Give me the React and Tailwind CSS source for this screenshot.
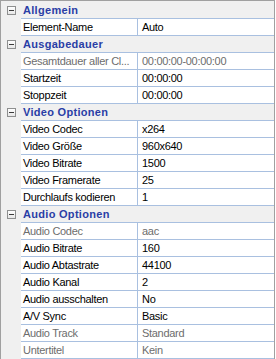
import React from "react";

const data = [
  { cat: "Allgemein", rows: [["Element-Name", "Auto"]] },
  {
    cat: "Ausgabedauer",
    rows: [
      ["Gesamtdauer aller Cl...", "00:00:00-00:00:00", true],
      ["Startzeit", "00:00:00"],
      ["Stoppzeit", "00:00:00"],
    ],
  },
  {
    cat: "Video Optionen",
    rows: [
      ["Video Codec", "x264"],
      ["Video Größe", "960x640"],
      ["Video Bitrate", "1500"],
      ["Video Framerate", "25"],
      ["Durchlaufs kodieren", "1"],
    ],
  },
  {
    cat: "Audio Optionen",
    rows: [
      ["Audio Codec", "aac", true],
      ["Audio Bitrate", "160"],
      ["Audio Abtastrate", "44100"],
      ["Audio Kanal", "2"],
      ["Audio ausschalten", "No"],
      ["A/V Sync", "Basic"],
      ["Audio Track", "Standard", true],
      ["Untertitel", "Kein", true],
    ],
  },
];

function Box() {
  return (
    <div className="w-[9px] h-[9px] border border-[#8e8f8f] bg-gradient-to-b from-white to-[#e6e6e6] flex items-center justify-center">
      <div className="w-[5px] h-px bg-[#3b3b3b]" />
    </div>
  );
}

export default function App() {
  return (
    <div className="w-[276px] h-[359px] bg-white font-['Liberation_Sans',Arial,sans-serif] text-[11px]">
      <div className="w-[275px] h-[359px] border border-b-0 border-[#a0a0a0] pt-px bg-[#f0f0f0]">
        {data.map((g) => (
          <React.Fragment key={g.cat}>
            <div className="flex h-[17px]">
              <div className="w-[20px] shrink-0 flex items-center pl-[6px]">
                <Box />
              </div>
              <div className="flex-1 border-b border-[#a9c0e0] pl-[2px] leading-[17px] font-bold tracking-[0.3px] text-[#2a3ea6] whitespace-nowrap">
                {g.cat}
              </div>
            </div>
            {g.rows.map(([n, v, dis]) => (
              <div key={n} className="flex h-[17px]">
                <div className="w-[20px] shrink-0" />
                <div
                  className={`flex-1 flex border-b border-[#a9c0e0] bg-white leading-[17px] tracking-[-0.3px] ${
                    dis ? "text-[#6d6d6d]" : "text-black"
                  }`}
                >
                  <div className="w-[116px] shrink-0 pl-[2px] pr-[1px] whitespace-nowrap overflow-hidden">
                    {n}
                  </div>
                  <div className="flex-1 border-l border-[#a9c0e0] pl-[4px] whitespace-nowrap overflow-hidden">
                    {v}
                  </div>
                </div>
              </div>
            ))}
          </React.Fragment>
        ))}
      </div>
    </div>
  );
}
